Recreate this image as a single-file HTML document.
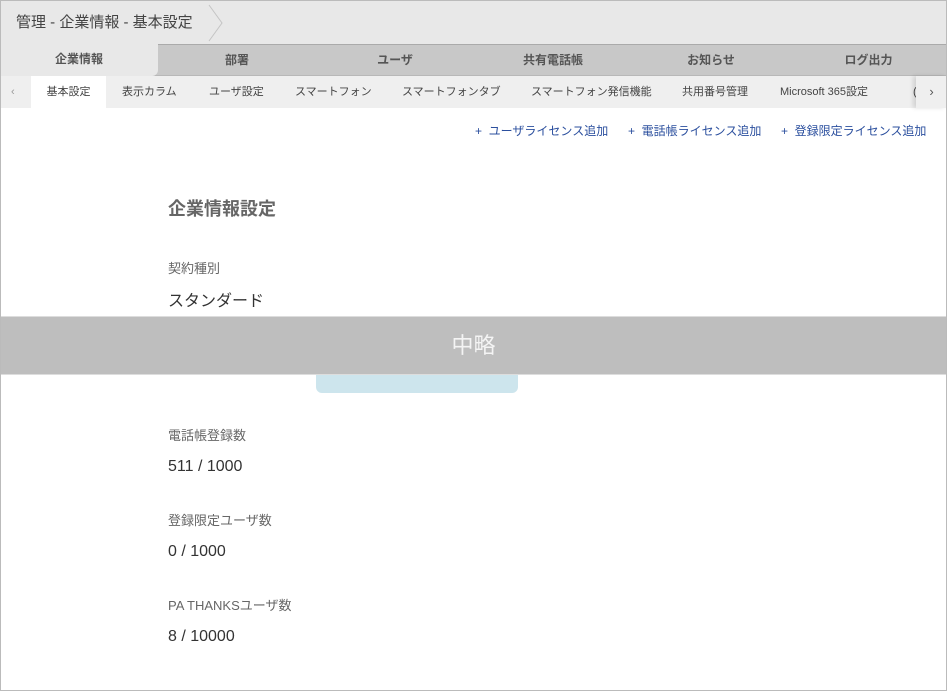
<!DOCTYPE html>
<html><head><meta charset="utf-8"><style>
*{margin:0;padding:0;box-sizing:border-box}
body{width:947px;height:691px;overflow:hidden;background:#fff;font-family:"Liberation Sans","Noto Sans CJK JP",sans-serif;position:relative}
.frame{position:absolute;left:0;top:0;width:947px;height:691px;border:1px solid #bbb;pointer-events:none;z-index:10}
.hdr{position:absolute;left:0;top:0;width:947px;height:44px;background:#e8e8e8}
.bc{position:absolute;left:16px;top:11px;font-size:15px;color:#444}
.tabs{position:absolute;left:0;top:44px;width:947px;height:32px;background:#c8c8c8;border-top:1px solid #aaa;border-bottom:1px solid #b8b8b8}
.tab{position:absolute;top:0;height:31px;line-height:31px;font-size:12px;color:#555;text-align:center;font-weight:bold}
.tab.act{background:#e8e8e8;left:0;width:158px;top:-1px;height:32px;border-radius:0 0 6px 0}
.sub{position:absolute;left:0;top:76px;width:947px;height:32px;background:#efefef}
.st{position:absolute;top:0;height:32px;line-height:32px;font-size:11px;color:#444}
.st.act{background:#fff;left:31px;width:75px;text-align:center}
.links{position:absolute;top:122px;font-size:12px;color:#2b4f9e}
.h{position:absolute;left:168px;font-size:18px;font-weight:bold;color:#666}
.lb{position:absolute;left:168px;font-size:13px;color:#666}
.v{position:absolute;left:168px;font-size:16px;color:#333}
</style></head><body>
<div class="hdr"><div class="bc">管理 - 企業情報 - 基本設定</div>
<svg style="position:absolute;left:206px;top:4px" width="20" height="38"><path d="M3 1 L16 19 L3 37" fill="none" stroke="#c4c4c4" stroke-width="1"/></svg></div>
<div class="tabs">
<div class="tab act">企業情報</div>
<div class="tab" style="left:158px;width:158px">部署</div>
<div class="tab" style="left:316px;width:158px">ユーザ</div>
<div class="tab" style="left:474px;width:158px">共有電話帳</div>
<div class="tab" style="left:632px;width:158px">お知らせ</div>
<div class="tab" style="left:790px;width:157px">ログ出力</div>
</div>
<div class="sub">
<div class="st" style="left:11px;color:#999">‹</div>
<div class="st act">基本設定</div>
<div class="st" style="left:122px">表示カラム</div>
<div class="st" style="left:209px">ユーザ設定</div>
<div class="st" style="left:295px">スマートフォン</div>
<div class="st" style="left:402px">スマートフォンタブ</div>
<div class="st" style="left:531px">スマートフォン発信機能</div>
<div class="st" style="left:682px">共用番号管理</div>
<div class="st" style="left:780px">Microsoft 365設定</div>
<div class="st" style="left:913px">(</div>
<div class="st" style="left:916px;width:31px;background:#efefef;box-shadow:-3px 0 4px rgba(0,0,0,.12);text-align:center;color:#555;font-size:13px">›</div>
</div>
<div class="links" style="left:475px">+&nbsp; ユーザライセンス追加</div>
<div class="links" style="left:628px">+&nbsp; 電話帳ライセンス追加</div>
<div class="links" style="left:781px">+&nbsp; 登録限定ライセンス追加</div>
<div class="h" style="top:195px">企業情報設定</div>
<div class="lb" style="top:258px">契約種別</div>
<div class="v" style="top:287px">スタンダード</div>
<div style="position:absolute;left:316px;top:360px;width:202px;height:33px;background:#cde5ed;border-radius:6px"></div>
<div style="position:absolute;left:0;top:316px;width:947px;height:59px;background:#bebebe;border-top:1px solid #ddd;border-bottom:1px solid #ddd;color:#f4f4f4;font-size:22px;text-align:center;line-height:57px">中略</div>
<div class="lb" style="top:425px">電話帳登録数</div>
<div class="v" style="top:458px">511 / 1000</div>
<div class="lb" style="top:510px">登録限定ユーザ数</div>
<div class="v" style="top:543px">0 / 1000</div>
<div class="lb" style="top:595px">PA THANKSユーザ数</div>
<div class="v" style="top:628px">8 / 10000</div>
<div class="frame"></div>
</body></html>
